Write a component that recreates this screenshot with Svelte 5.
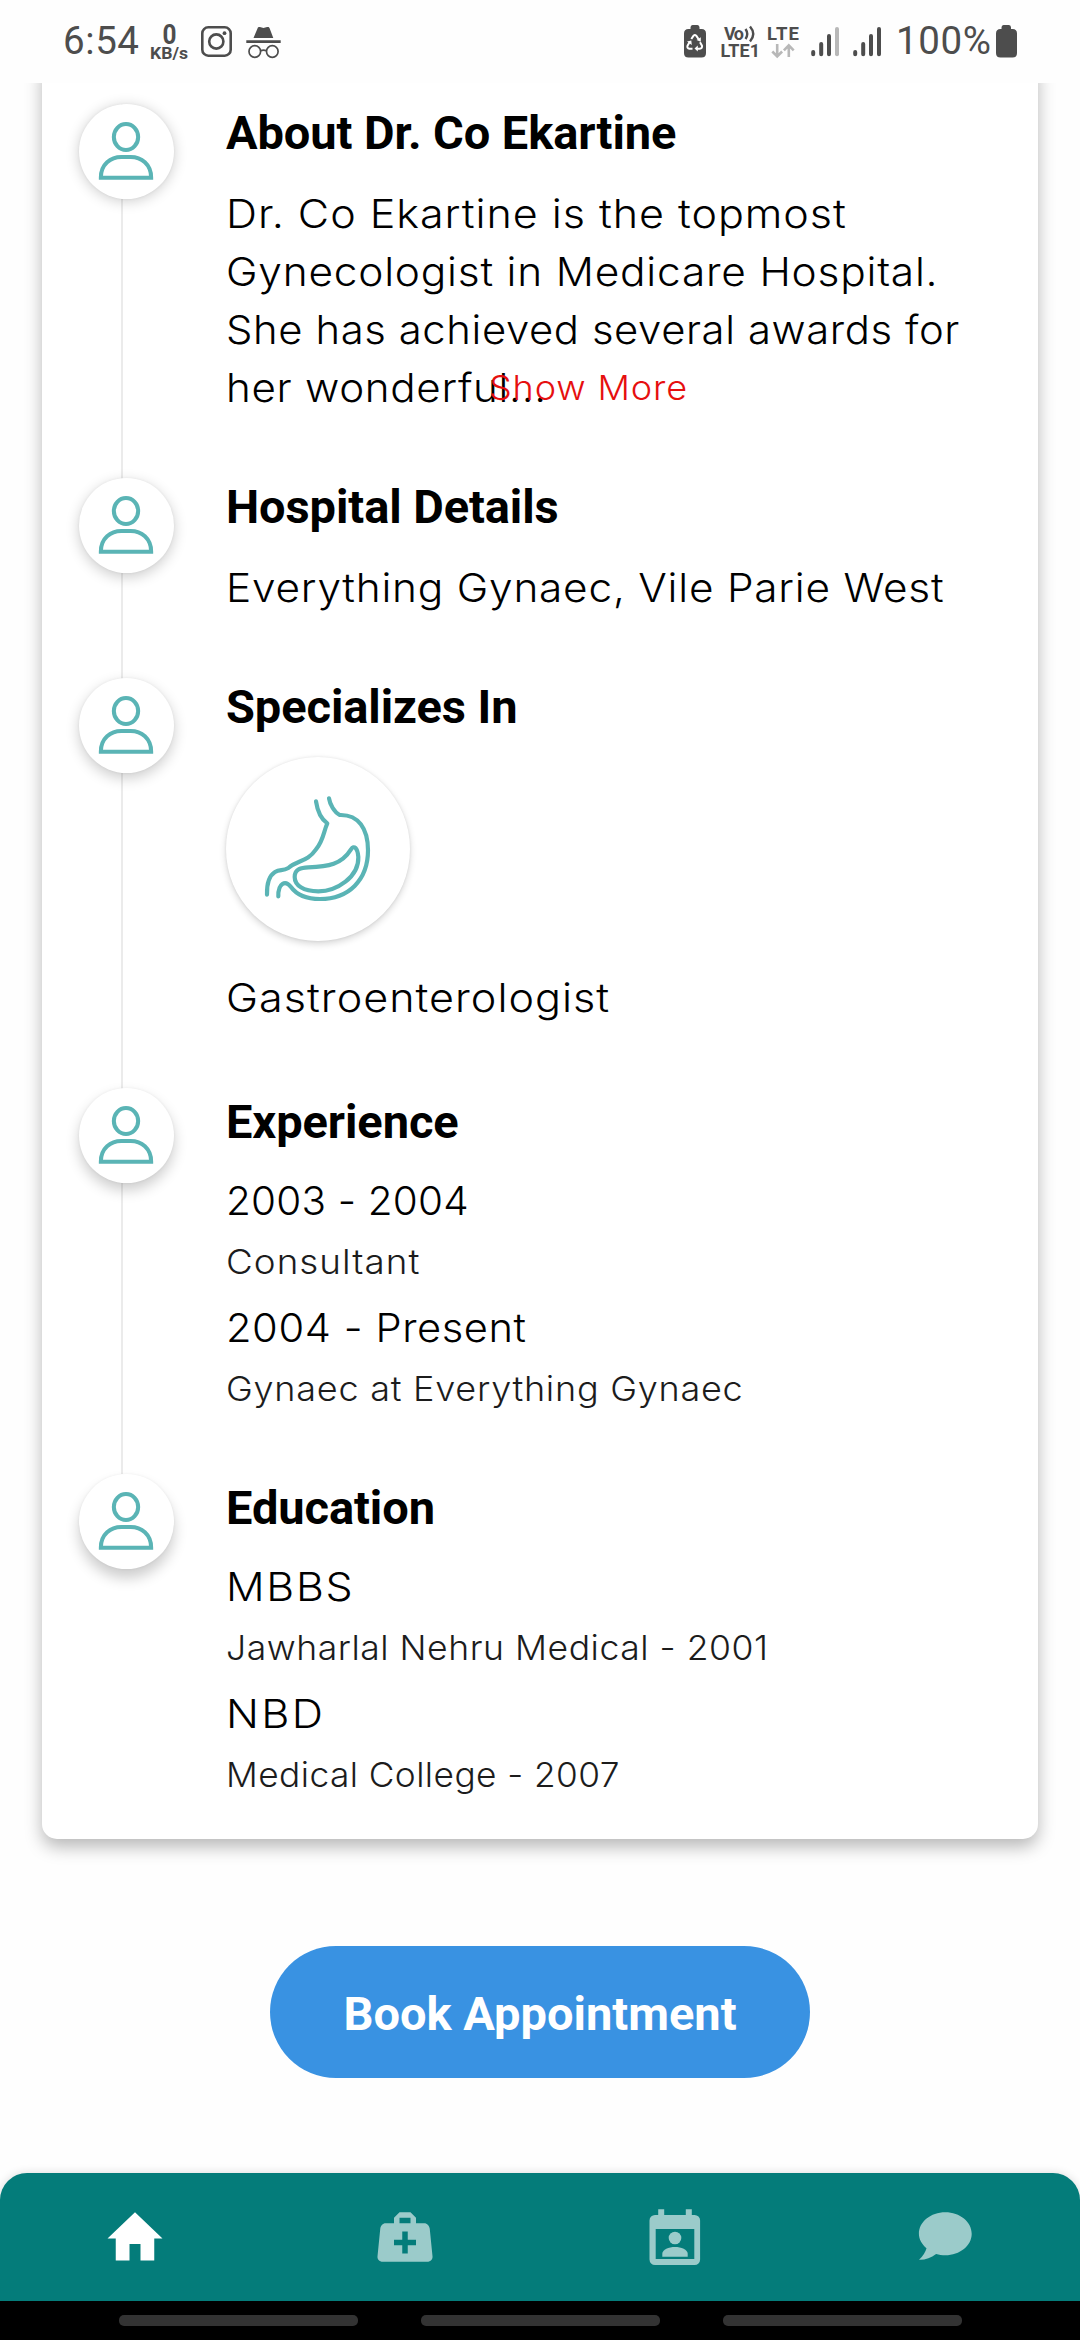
<script>
  // `height` is the distance to the next timeline node, `lift` the node's shadow offset.
  // `wide` is the relative set width of a line, `track` its full letter-spacing in px.
  const sections = [
    {
      title: 'About Dr. Co Ekartine', height: 374, lift: 2,
      para: [
        { text: 'Dr. Co Ekartine is the topmost', track: 2.35, wide: 1.127 },
        { text: 'Gynecologist in Medicare Hospital.', track: 1.95, wide: 1.1 },
        { text: 'She has achieved several awards for', track: 1.53, wide: 1.075 },
        { text: 'her wonderful...', track: 1.7, wide: 1.088 }
      ],
      more: { text: 'Show More', track: 2.1, wide: 1.1 }
    },
    {
      title: 'Hospital Details', height: 200, lift: 4,
      para: [{ text: 'Everything Gynaec, Vile Parie West', track: 1.93, wide: 1.098 }]
    },
    {
      title: 'Specializes In', height: 410, lift: 5,
      specialty: { text: 'Gastroenterologist', track: 2.5, wide: 1.128 }
    },
    {
      title: 'Experience', height: 386, lift: 7,
      entries: [
        {
          main: { text: '2003 - 2004', track: 0.5, wide: 1.02 },
          sub: { text: 'Consultant', track: 2.5, wide: 1.137 }
        },
        {
          main: { text: '2004 - Present', track: 1.46, wide: 1.068 },
          sub: { text: 'Gynaec at Everything Gynaec', track: 1.82, wide: 1.1 }
        }
      ]
    },
    {
      title: 'Education', height: 365, lift: 9,
      entries: [
        {
          main: { text: 'MBBS', track: 4.3, wide: 1.12 },
          sub: { text: 'Jawharlal Nehru Medical - 2001', track: 1.3, wide: 1.077 }
        },
        {
          main: { text: 'NBD', track: 5.8, wide: 1.14 },
          sub: { text: 'Medical College - 2007', track: 1.1, wide: 1.062 }
        }
      ]
    }
  ];

  // Splits the extra width of a line between wider glyphs and letter-spacing.
  const fit = (line) =>
    `letter-spacing:${(line.track * 0.38).toFixed(2)}px;transform:scaleX(${(1 + 0.6 * (line.wide - 1)).toFixed(4)})`;
</script>

<div class="screen">
  <header class="status">
    <svg class="left" width="300" height="83" viewBox="0 0 300 83">
      <text x="63" y="53.5" font-size="38.5" textLength="76">6:54</text>
      <text x="169.5" y="43.5" font-size="27" font-weight="700" text-anchor="middle" textLength="14" lengthAdjust="spacingAndGlyphs">0</text>
      <text x="150" y="59.3" font-size="16" font-weight="700" textLength="38" lengthAdjust="spacingAndGlyphs">KB/s</text>
      <g fill="none" stroke="#4d4d4d" stroke-width="2.6">
        <rect x="202.3" y="27.3" width="28.4" height="28.4" rx="6" />
        <circle cx="216.3" cy="41.5" r="7.1" />
        <circle cx="254.8" cy="51.5" r="5.8" stroke-width="1.7" />
        <circle cx="272.3" cy="51.5" r="5.8" stroke-width="1.7" />
        <path d="M260.5 50.7q3-1.2 6 0" stroke-width="1.7" />
      </g>
      <circle cx="224.5" cy="33.2" r="1.9" />
      <path d="M253.5 38l4-9.6c.4-1.3 1.2-1.8 2.4-1.3 2.6 1.1 4.6 1.1 7.2 0 1.2-.5 2-.1 2.5 1.2l3.7 9.7zM246.3 40.3h34.4v2.7h-34.4z" />
    </svg>
    <svg class="right" width="400" height="83" viewBox="680 0 400 83">
      <path d="M690.5 27.5q0-2.5 2-2.5h5q2 0 2 2.5v1.5h2q4.5 0 4.5 4.5v19.5q0 4.5-4.5 4.5h-13q-4.5 0-4.5-4.5v-19.5q0-4.5 4.5-4.5h2z" />
      <g fill="none" stroke="#fff" stroke-width="2" stroke-linejoin="round">
        <path d="M691.3 39l2.3-3.4q1.3-1.3 2.6 0l2.3 3.4M700 42.2l2 3.6q.5 2.7-2.3 2.9h-3.4M692.5 48.7h-3q-2.8-.5-2-3l2-3.5" />
      </g>
      <path fill="#fff" d="M700.8 37.2v4.5l-4.3-1.7zM697.8 45.6v6l-3.3-3zM687 41.6l4.3-1.2.5 4.5z" />
      <text x="724" y="39.5" font-size="18" font-weight="700" textLength="20">Vo</text>
      <path fill="none" stroke="#4d4d4d" stroke-width="2.4" d="M745.5 29q3.5 5 0 10M750 26.5q6.5 7.500 0 15" />
      <text x="720.5" y="56.8" font-size="18" font-weight="700" textLength="39.5">LTE1</text>
      <text x="767" y="40.3" font-size="18.5" font-weight="700" textLength="32">LTE</text>
      <path fill="none" stroke="#b8b8b8" stroke-width="2.6" d="M777.2 44v12M772.3 51.5l4.9 4.9 4.9-4.9M788.8 57v-11.5M783.9 50.3l4.9-4.9 4.9 4.9" />
      <g fill="none" stroke="#4d4d4d" stroke-width="4" stroke-linecap="round">
        <path d="M813.2 52v2.2M821.2 44v10.2M829 36v18.2M855.2 52v2.2M863.2 44v10.2M871 36v18.2M879 29v25.2" />
        <path stroke="#b8b8b8" d="M837 29v25.2" />
      </g>
      <text x="896" y="53.5" font-size="38.5" textLength="95">100%</text>
      <path d="M1001.5 27.5q0-2.5 2-2.5h5.500q2 0 2 2.5v1.5h1.5q4.5 0 4.5 4.5v19.5q0 4.5-4.5 4.5h-12q-4.5 0-4.5-4.5v-19.5q0-4.5 4.5-4.5h1z" />
    </svg>
  </header>

  <main>
    <div class="card">
      {#each sections as s}
        <section style="height:{s.height}px">
          <div class="rail">
            <div class="node" style="box-shadow: 0 {s.lift}px 14px rgba(0,0,0,.2), 0 0 3px rgba(0,0,0,.06)">
              <svg width="95" height="95" viewBox="237 311 285 285" fill="none" stroke="#5ab4b5" stroke-width="12">
                <ellipse cx="378" cy="410" rx="36.5" ry="39" />
                <path d="M302.500 532C302.500 492 332 470 364 470H392C424 470 453.500 492 453.500 532Z" />
              </svg>
            </div>
          </div>
          <div class="body" class:low={s.entries}>
            <h2>{s.title}</h2>
            {#if s.para}
              <div class="para">
                {#each s.para as line}
                  <p class="main" style={fit(line)}>{line.text}</p>
                {/each}
                {#if s.more}<span class="more" style={fit(s.more)}>{s.more.text}</span>{/if}
              </div>
            {/if}
            {#if s.specialty}
              <div class="organ">
                <svg width="184" height="184" viewBox="78 80 552 552" fill="none" stroke="#5ab4b5" stroke-width="12.5" stroke-linecap="round" stroke-linejoin="round">
                  <path d="M387 204C390 222 402 245 419 254C475 252 504 295 504 360C504 450 445 506 360 506C325 506 291 495 273 470C256 448 234 458 235 498" />
                  <path d="M348 213C352 240 362 265 382 279C371 302 371 330 348 357C321 396 294 388 265 413C248 423 240 416 225 425C207 436 200 455 201 493" />
                  <path d="M453 357C462 343 473 353 475 380C477 440 410 483 355 483C310 483 284 465 284 440C284 415 305 412 325 411C385 409 425 402 453 357Z" />
                </svg>
              </div>
              <p class="main specialty" style={fit(s.specialty)}>{s.specialty.text}</p>
            {/if}
            {#if s.entries}
              {#each s.entries as e}
                <div class="entry">
                  <p class="main" style={fit(e.main)}>{e.main.text}</p>
                  <p class="sub" style={fit(e.sub)}>{e.sub.text}</p>
                </div>
              {/each}
            {/if}
          </div>
        </section>
      {/each}
    </div>
    <button>Book Appointment</button>
  </main>

  <nav>
    <a href="#home" aria-label="Home" class="active">
      <svg width="66" height="66" viewBox="0 0 24 24"><path d="M10 20.500v-6h4v6h5v-8h3L12 3 2 12.500h3v8z" /></svg>
    </a>
    <a href="#care" aria-label="Care">
      <svg width="66" height="66" viewBox="0 0 24 24"><path d="M10 3L8 5v2H5C3.850 7 3.120 8 3 9L2 19C1.880 20 2.540 21 4 21h16c1.460 0 2.120-1 2-2L21 9C20.880 8 20.060 7 19 7h-3V5l-2-2h-4m0 2h4v2h-4V5m1 5h2v3h3v2h-3v3h-2v-3H8v-2h3v-3z" /></svg>
    </a>
    <a href="#calendar" aria-label="Appointments">
      <svg width="66" height="66" viewBox="0 0 66 66">
        <path fill-rule="evenodd" d="M16.200 5.300h6V11h21.600V5.300h6V11h2.800a5.500 5.500 0 0 1 5.500 5.500v39a5.500 5.500 0 0 1-5.500 5.500H13a5.500 5.500 0 0 1-5.500-5.500v-39A5.500 5.500 0 0 1 13 11h3.200zM13.700 25v30h38.600V25z" />
        <circle cx="33" cy="34" r="6.300" />
        <path d="M20.300 52.700v-3c0-4 6.500-6.700 12.700-6.700s12.700 2.700 12.700 6.700v3z" />
      </svg>
    </a>
    <a href="#chat" aria-label="Chat">
      <svg width="66" height="66" viewBox="0 0 66 66">
        <path d="M33.300 8.300c14.600 0 26.400 9.600 26.400 21.500S47.900 51.300 33.300 51.300c-3.200 0-6.300-.5-9.200-1.400C19 53.500 13.500 56 7 55.800c4-4 6.600-7.800 7.500-11.600C9.800 40.300 6.900 35.300 6.900 29.800 6.900 17.900 18.700 8.300 33.300 8.300z" />
      </svg>
    </a>
  </nav>
  <footer><i></i><i></i><i></i></footer>
</div>

<style>
  :global(body) { margin: 0; background: #fefefe; }
  .screen {
    width: 1080px;
    height: 2340px;
    display: flex;
    flex-direction: column;
    overflow: hidden;
    background: #fefefe;
    font-family: Inter, "Liberation Sans", sans-serif;
    color: #000;
  }
  .status { display: flex; justify-content: space-between; height: 83px; flex: none; }
  .status svg { display: block; fill: #4d4d4d; font-family: Roboto, sans-serif; }
  main {
    height: 2090px;
    flex: none;
    display: flex;
    flex-direction: column;
    align-items: center;
    overflow: hidden;
  }
  .card {
    box-sizing: border-box;
    width: 996px;
    height: 1776px;
    margin-top: -20px;
    padding: 41px 37px 0;
    flex: none;
    border-radius: 0 0 15px 15px;
    background: #fff;
    box-shadow: 0 8px 17px rgba(0, 0, 0, .28);
  }
  section { display: grid; grid-template-columns: 95px 1fr; column-gap: 52px; }
  .rail { background: linear-gradient(#ebebeb, #ebebeb) 42px 0 / 2px 100% no-repeat; }
  section:last-child .rail { background: none; }
  .node { width: 95px; height: 95px; border-radius: 50%; background: #fff; }
  .node svg { display: block; }
  h2 { margin: 0; font: 700 47px/58px Roboto, sans-serif; letter-spacing: -.08px; white-space: nowrap; }
  .low { padding-top: 5px; }
  p { width: max-content; margin: 0; font-weight: 300; white-space: nowrap; transform-origin: 0 50%; }
  .main { font-size: 40px; line-height: 58px; }
  .sub { font-size: 34px; line-height: 64.6px; color: #1c1c1c; }
  .para { position: relative; margin-top: 22.5px; }
  .more {
    position: absolute;
    left: 263px;
    bottom: 0;
    font-size: 34px;
    font-weight: 300;
    line-height: 58px;
    color: #e60f0f;
    white-space: nowrap;
    transform-origin: 0 50%;
  }
  .organ {
    width: 184px;
    height: 184px;
    margin-top: 21px;
    border-radius: 50%;
    background: #fff;
    box-shadow: 0 3px 7px rgba(0, 0, 0, .16), 0 0 3px rgba(0, 0, 0, .08);
  }
  .organ svg { display: block; }
  .specialty { margin-top: 27.5px; }
  .entry { margin-bottom: 4.7px; }
  h2 + .entry { margin-top: 21px; }
  button {
    width: 540px;
    height: 132px;
    flex: none;
    margin-top: 107px;
    padding: 4px 0 0;
    border: 0;
    border-radius: 66px;
    background: #3992e2;
    color: #fff;
    font: 700 47px/58px Roboto, sans-serif;
  }
  nav {
    height: 128px;
    flex: none;
    display: grid;
    grid-template-columns: repeat(4, 1fr);
    place-items: center;
    border-radius: 27px 27px 0 0;
    background: #047c7a;
    box-shadow: 0 0 10px rgba(0, 0, 0, .14);
  }
  nav a { color: #9bcbca; height: 66px; }
  nav a.active { color: #fff; }
  nav svg { display: block; fill: currentColor; }
  footer {
    height: 39px;
    flex: none;
    box-sizing: border-box;
    display: flex;
    justify-content: center;
    gap: 63px;
    padding-top: 14px;
    background: #000;
  }
  footer i { width: 239px; height: 11px; border-radius: 5px; background: #333; }
</style>
